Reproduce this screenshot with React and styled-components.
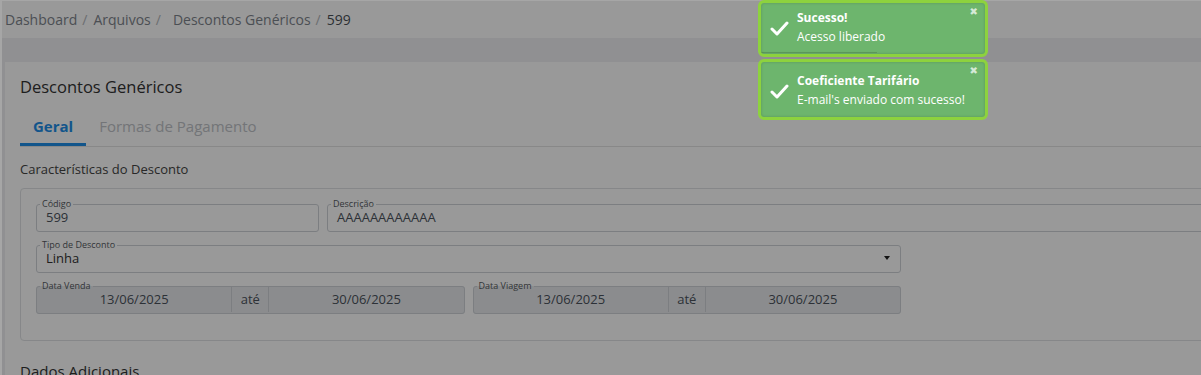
import React from "react";
import styled, { createGlobalStyle } from "styled-components";

const Global = createGlobalStyle`
  html, body { margin: 0; padding: 0; }
  body {
    background: #a6a6a6;
    font-family: "Open Sans", "Noto Sans", sans-serif;
    overflow: hidden;
    width: 1201px;
    height: 375px;
  }
`;

const Page = styled.div`
  margin: 1px 0 0 2px;
  background: #f0f0f3;
  height: 374px;
  overflow: hidden;
`;

const Breadcrumb = styled.nav`
  height: 37px;
  background: #fff;
  display: flex;
  align-items: center;
  padding-left: 3px;
  font-size: 14px;
  white-space: nowrap;
`;

const Crumb = styled.span`
  color: ${(p) => (p.$active ? "#4a5058" : "#7e848c")};
  margin-left: ${(p) => (p.$gap ? `${p.$gap}px` : "0")};
`;

const Sep = styled.span`
  color: #b3b7bc;
  margin: 0 6px 0 5px;
`;

const Main = styled.main`
  padding: 24px 0 0 3px;
`;

const Card = styled.section`
  background: #fff;
  width: 1800px;
  padding: 14px 0 0 15px;
  height: 400px;
`;

const Title = styled.h1`
  margin: 0;
  font-size: 16.5px;
  line-height: 22px;
  font-weight: 400;
  color: #333;
`;

const Tabs = styled.div`
  margin-top: 10px;
  display: flex;
  border-bottom: 1px solid #e3e3e3;
  height: 38px;
`;

const Tab = styled.div`
  padding: 8px 13px 7px;
  font-size: 15px;
  line-height: 20px;
  font-weight: ${(p) => (p.$active ? 700 : 400)};
  color: ${(p) => (p.$active ? "#1e8ee8" : "#c0c3c8")};
  border-bottom: 3px solid ${(p) => (p.$active ? "#1e8ee8" : "transparent")};
  height: 20px;
`;

const SectionTitle = styled.h2`
  margin: 13px 0 10px;
  font-size: 13px;
  line-height: 18px;
  font-weight: 500;
  color: #444;
`;

const Box = styled.div`
  width: 1732px;
  border: 1px solid #e0e2e5;
  border-radius: 4px;
  padding: 10px 15px 26px;
  display: grid;
  grid-template-columns: repeat(12, 137.5px);
  column-gap: 8px;
  row-gap: 8px;
`;

const Field = styled.fieldset`
  margin: 0;
  padding: 0;
  min-width: 0;
  border: 1px solid #cfd3d8;
  border-radius: 3px;
  grid-column: span ${(p) => p.$span};
  background: ${(p) => (p.$disabled ? "#e8eaed" : "#fff")};
  display: flex;
  align-items: flex-start;
  height: 33px;
  box-sizing: border-box;
`;

const Legend = styled.legend`
  font-size: 9px;
  line-height: 10px;
  padding: 0 2px;
  margin-left: 3px;
  color: #555a60;
`;

const Value = styled.div`
  flex: ${(p) => (p.$grow ? 1 : "none")};
  padding: 0 9px;
  font-size: 13px;
  line-height: 16px;
  height: 16px;
  white-space: nowrap;
  color: ${(p) => p.$color || "#4b535c"};
  text-align: ${(p) => (p.$center ? "center" : "left")};
`;

const Addon = styled.div`
  width: 36px;
  margin-top: -5px;
  height: 26px;
  border-left: 1px solid #cfd3d8;
  border-right: 1px solid #cfd3d8;
  font-size: 13px;
  line-height: 26px;
  text-align: center;
  color: #4b535c;
`;

const Caret = styled.span`
  margin: 6px 10px 0 0;
  width: 0;
  height: 0;
  border-left: 3.5px solid transparent;
  border-right: 3.5px solid transparent;
  border-top: 4px solid #222;
`;

const SubTitle = styled.h2`
  margin: 20px 0 0;
  font-size: 15px;
  line-height: 20px;
  font-weight: 400;
  color: #333;
`;

const Backdrop = styled.div`
  position: fixed;
  top: 1px;
  left: 2px;
  right: 0;
  bottom: 0;
  background: rgba(0, 0, 0, 0.4);
  z-index: 10;
`;

const ToastStack = styled.div`
  position: fixed;
  top: 0;
  left: 758px;
  width: 230px;
  z-index: 20;
  display: flex;
  flex-direction: column;
  gap: 2px;
`;

const Toast = styled.div`
  position: relative;
  box-sizing: border-box;
  border: 3px solid #8dd23e;
  border-radius: 6px;
  background: #6db56d;
  box-shadow: inset 0 0 3px rgba(0, 0, 0, 0.18);
  display: flex;
  align-items: center;
  padding: ${(p) => (p.$tight ? "5px" : "9px")} 20px 8px 0;
  color: #fff;
  overflow: hidden;
`;

const IconCol = styled.div`
  width: 36px;
  flex: none;
  display: flex;
  justify-content: center;
  margin-top: 2px;
`;

const ToastText = styled.div`
  font-size: 12px;
  line-height: 19px;
`;

const ToastTitle = styled.div`
  font-weight: 700;
`;

const Close = styled.span`
  position: absolute;
  top: 3px;
  right: 7px;
  font-size: 10px;
  line-height: 12px;
  color: rgba(255, 255, 255, 0.72);
  font-family: "DejaVu Sans", sans-serif;
`;

const Progress = styled.div`
  position: absolute;
  left: 0;
  bottom: 1px;
  height: 1px;
  background: rgba(0, 0, 0, 0.14);
`;

const Check = () => (
  <svg width="19" height="15" viewBox="0 0 19 15">
    <polyline
      points="2,8 7,13 17,2"
      fill="none"
      stroke="#fff"
      strokeWidth="3"
      strokeLinecap="round"
      strokeLinejoin="round"
    />
  </svg>
);

export default function App() {
  return (
    <>
      <Global />
      <Page>
        <Breadcrumb>
          <Crumb>Dashboard</Crumb>
          <Sep>/</Sep>
          <Crumb>Arquivos</Crumb>
          <Sep>/</Sep>
          <Crumb $gap={6}>Descontos Genéricos</Crumb>
          <Sep>/</Sep>
          <Crumb $active>599</Crumb>
        </Breadcrumb>
        <Main>
          <Card>
            <Title>Descontos Genéricos</Title>
            <Tabs>
              <Tab $active>Geral</Tab>
              <Tab>Formas de Pagamento</Tab>
            </Tabs>
            <SectionTitle>Características do Desconto</SectionTitle>
            <Box>
              <Field $span={2}>
                <Legend>Código</Legend>
                <Value $grow>599</Value>
              </Field>
              <Field $span={10}>
                <Legend>Descrição</Legend>
                <Value $grow>AAAAAAAAAAAA</Value>
              </Field>
              <Field $span={6}>
                <Legend>Tipo de Desconto</Legend>
                <Value $grow $color="#333">Linha</Value>
                <Caret />
              </Field>
              <Field $span={6} style={{ visibility: "hidden" }} />
              <Field $span={3} $disabled>
                <Legend>Data Venda</Legend>
                <Value $grow $center>13/06/2025</Value>
                <Addon>até</Addon>
                <Value $grow $center>30/06/2025</Value>
              </Field>
              <Field $span={3} $disabled>
                <Legend>Data Viagem</Legend>
                <Value $grow $center>13/06/2025</Value>
                <Addon>até</Addon>
                <Value $grow $center>30/06/2025</Value>
              </Field>
            </Box>
            <SubTitle>Dados Adicionais</SubTitle>
          </Card>
        </Main>
      </Page>
      <Backdrop />
      <ToastStack>
        <Toast $tight>
          <IconCol>
            <Check />
          </IconCol>
          <ToastText>
            <ToastTitle>Sucesso!</ToastTitle>
            <div>Acesso liberado</div>
          </ToastText>
          <Close>✖</Close>
          <Progress style={{ width: "52%" }} />
        </Toast>
        <Toast>
          <IconCol>
            <Check />
          </IconCol>
          <ToastText>
            <ToastTitle>Coeficiente Tarifário</ToastTitle>
            <div>E-mail's enviado com sucesso!</div>
          </ToastText>
          <Close>✖</Close>
        </Toast>
      </ToastStack>
    </>
  );
}
